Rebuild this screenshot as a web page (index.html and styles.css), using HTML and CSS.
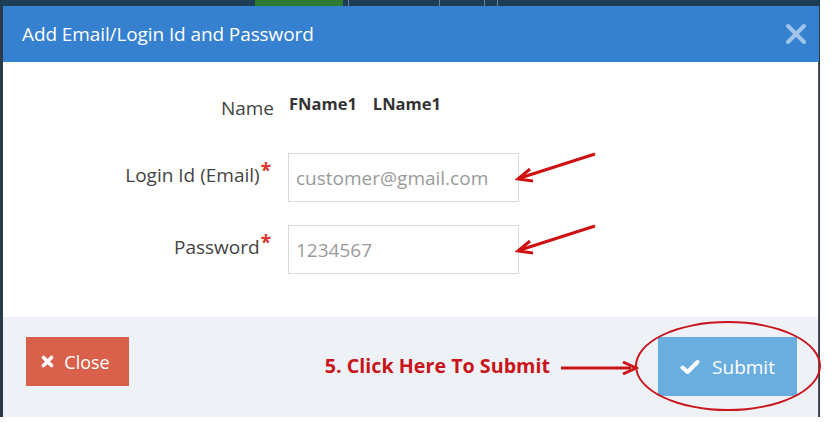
FILE: index.html
```html
<!DOCTYPE html>
<html lang="en">
<head>
  <meta charset="UTF-8">
  <meta name="viewport" content="width=device-width, initial-scale=1.0">
  <title>Add Email/Login Id and Password</title>
  <link rel="stylesheet" href="styles.css">
</head>
<body>

  <div class="screen">
    <div class="topbar">
      <span class="tab"></span>
      <span class="tab tab-active"></span>
      <span class="tab tab-sep s1"></span>
      <span class="tab tab-sep s2"></span>
      <span class="tab tab-sep s3"></span>
      <span class="tab tab-sep s4"></span>
    </div>

    <div class="modal">
      <div class="modal-header">
        <h4>Add Email/Login Id and Password</h4>
        <button type="button" class="header-close" aria-label="Close">
          <svg width="22" height="22" viewBox="0 0 22 22">
            <path d="M3 3 L19 19 M19 3 L3 19" stroke="currentColor" stroke-width="4" stroke-linecap="round"/>
          </svg>
        </button>
      </div>

      <form class="modal-body" id="loginForm">
        <div class="form-row name-row">
          <label>Name</label>
          <div class="name-value"><span>FName1</span><span>LName1</span></div>
        </div>

        <div class="form-row">
          <label for="email">Login Id (Email)<sup>*</sup></label>
          <div class="field">
            <input type="email" id="email" placeholder="customer@gmail.com">
            <svg class="pointer" width="84" height="32" viewBox="0 0 84 32">
              <path d="M80 2 L5 26" stroke="#d01010" stroke-width="3" fill="none"/>
              <path d="M15 17 L3 27 L18 29" stroke="#d01010" stroke-width="3" fill="none" stroke-linejoin="miter"/>
            </svg>
          </div>
        </div>

        <div class="form-row">
          <label for="password">Password<sup>*</sup></label>
          <div class="field">
            <input type="text" id="password" placeholder="1234567">
            <svg class="pointer" width="84" height="32" viewBox="0 0 84 32">
              <path d="M80 2 L5 26" stroke="#d01010" stroke-width="3" fill="none"/>
              <path d="M15 17 L3 27 L18 29" stroke="#d01010" stroke-width="3" fill="none" stroke-linejoin="miter"/>
            </svg>
          </div>
        </div>
      </form>

      <div class="modal-footer">
        <button type="button" class="btn btn-close">
          <svg width="13" height="13" viewBox="0 0 13 13">
            <path d="M2.5 2.5 L10.5 10.5 M10.5 2.5 L2.5 10.5" stroke="#fff" stroke-width="3.6" stroke-linecap="round"/>
          </svg>
          Close
        </button>

        <div class="footer-note">
          <span>5. Click Here To Submit</span>
          <svg width="78" height="14" viewBox="0 0 78 14">
            <path d="M0 7 L70 7" stroke="#c8141a" stroke-width="3"/>
            <path d="M62 1 L75 7 L62 13" stroke="#c8141a" stroke-width="3" fill="none"/>
          </svg>
        </div>

        <div class="submit-wrap">
          <button type="submit" form="loginForm" class="btn btn-submit">
            <svg width="20" height="16" viewBox="0 0 20 16">
              <path d="M2.5 8.5 L7.5 13 L17.5 3" stroke="#fff" stroke-width="4" fill="none" stroke-linecap="round" stroke-linejoin="round"/>
            </svg>
            Submit
          </button>
          <span class="ring"></span>
        </div>
      </div>
    </div>
  </div>

</body>
</html>
```

FILE: styles.css
```css
* {
  margin: 0;
  padding: 0;
  box-sizing: border-box;
}

body {
  font-family: 'Open Sans', 'Noto Sans', sans-serif;
  background: #fff;
  color: #333;
}

.screen {
  width: 820px;
  height: 417px;
  background: #2a3a48;
}

/* strip of the page behind the dialog */
.topbar {
  display: flex;
  height: 6px;
  background: #1d3d57;
}

.tab {
  width: 255px;
}

.tab-active {
  width: 88px;
  background: #2f7a32;
}

.tab-sep {
  border-right: 1px solid #6d8598;
}

.s1 { width: 6px; }
.s2 { width: 91px; }
.s3 { width: 45px; }
.s4 { width: 13px; }

.modal {
  margin-left: 3px;
  width: 816px;
  background: #fff;
}

.modal-header {
  height: 56px;
  display: flex;
  align-items: center;
  justify-content: space-between;
  padding: 0 12px 0 19px;
  background: #3580cf;
}

.modal-header h4 {
  font-size: 19px;
  font-weight: 400;
  color: #fff;
  letter-spacing: -0.1px;
}

.header-close {
  display: flex;
  border: none;
  background: none;
  color: #a3c4ea;
  cursor: pointer;
}

.modal-body {
  height: 255px;
  padding-top: 30px;
  display: flex;
  flex-direction: column;
  gap: 23px;
  border-right: 1px solid #555;
}

.form-row {
  display: grid;
  grid-template-columns: 268px 231px;
  column-gap: 17px;
  align-items: center;
}

.form-row label {
  text-align: right;
  font-size: 19px;
  color: #444;
  padding-bottom: 5px;
}

.form-row label sup {
  color: #d9342b;
  font-size: 19px;
  font-weight: 700;
  line-height: 0;
  vertical-align: 5px;
  margin-left: 1px;
}

.name-row {
  height: 30px;
  margin-bottom: 8px;
}

.name-row label {
  padding-top: 2px;
  padding-bottom: 2px;
  margin-right: -3px;
}

.name-value {
  display: flex;
  gap: 16px;
  font-size: 16.5px;
  font-weight: 700;
  color: #333;
  padding-bottom: 8px;
  padding-left: 1px;
}

.field {
  position: relative;
}

.field input {
  width: 231px;
  height: 49px;
  padding: 0 7px;
  border: 1px solid #d9d9d9;
  font-family: inherit;
  font-size: 19px;
  color: #333;
  outline: none;
}

.field input::placeholder {
  color: #9a9a9a;
}

.pointer {
  position: absolute;
  left: 227px;
  top: -1px;
}

.modal-footer {
  height: 100px;
  display: flex;
  align-items: flex-start;
  padding: 20px 21px 0 23px;
  background: #eef1f5;
  border-right: 1px solid #555;
}

.btn {
  display: flex;
  align-items: center;
  justify-content: center;
  gap: 10px;
  border: none;
  color: #fff;
  font-family: inherit;
  cursor: pointer;
}

.btn-close {
  width: 103px;
  height: 49px;
  background: #d9604b;
  font-size: 18px;
  padding-right: 4px;
}

.footer-note {
  margin-left: auto;
  margin-right: 19px;
  margin-top: 15px;
  display: flex;
  align-items: center;
  gap: 11px;
  font-size: 19.7px;
  font-weight: 700;
  color: #c8141a;
}

.footer-note svg {
  margin-top: 4px;
}

.submit-wrap {
  position: relative;
}

.btn-submit {
  width: 139px;
  height: 59px;
  background: #6aaee0;
  font-size: 19px;
  gap: 12px;
}

.ring {
  position: absolute;
  left: -23px;
  top: -16px;
  width: 186px;
  height: 90px;
  border: 2.5px solid #c8141a;
  border-radius: 50%;
  pointer-events: none;
}
```
